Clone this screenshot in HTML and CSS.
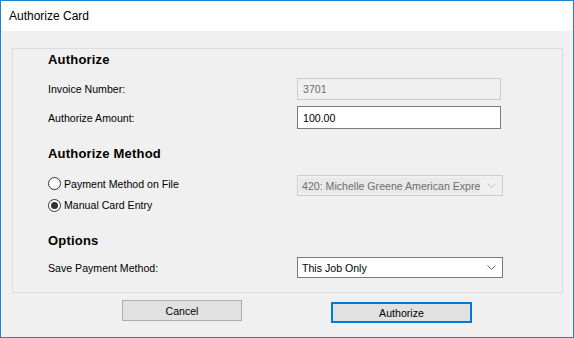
FILE: index.html
```html
<!DOCTYPE html>
<html lang="en">
<head>
    <meta charset="UTF-8">
    <title>Authorize Card</title>
    <link rel="stylesheet" href="styles.css">
</head>
<body>
    <div class="window">
        <div class="titlebar">Authorize Card</div>

        <div class="content">
            <!-- Group box -->
            <div class="group">
                <div class="heading">Authorize</div>

                <div class="row row-invoice">
                    <label class="label">Invoice Number:</label>
                    <input class="field disabled" value="3701" disabled>
                </div>
                <div class="row row-amount">
                    <label class="label">Authorize Amount:</label>
                    <input class="field" value="100.00">
                </div>

                <div class="heading heading-method">Authorize Method</div>

                <div class="row row-onfile">
                    <label class="radio"><span class="dot"></span>Payment Method on File</label>
                    <div class="combo disabled">
                        <span class="combo-text">420: Michelle Greene American Express</span>
                        <svg class="chevron" width="9" height="5" viewBox="0 0 9 5"><path d="M0.5 0.5 L4.5 4.5 L8.5 0.5" fill="none" stroke="currentColor" stroke-width="1"/></svg>
                    </div>
                </div>
                <div class="row row-manual">
                    <label class="radio"><span class="dot checked"></span>Manual Card Entry</label>
                </div>

                <div class="heading heading-options">Options</div>

                <div class="row row-save">
                    <label class="label">Save Payment Method:</label>
                    <div class="combo">
                        <span class="combo-text">This Job Only</span>
                        <svg class="chevron" width="9" height="5" viewBox="0 0 9 5"><path d="M0.5 0.5 L4.5 4.5 L8.5 0.5" fill="none" stroke="currentColor" stroke-width="1"/></svg>
                    </div>
                </div>
            </div>

            <div class="buttons">
                <button class="btn btn-cancel">Cancel</button>
                <button class="btn btn-default">Authorize</button>
            </div>
        </div>
    </div>
</body>
</html>
```

FILE: styles.css
```css
* {
    box-sizing: border-box;
}
body {
    margin: 0;
    font-family: "Liberation Sans", Arial, sans-serif;
    font-size: 10.6px;
    color: #000;
    background: #f0f0f0;
}
.window {
    width: 574px;
    height: 338px;
    border: 1px solid #1883d7;
    background: #f0f0f0;
}
.titlebar {
    height: 30px;
    line-height: 30px;
    padding-left: 8px;
    background: #fff;
    font-size: 12px;
}
.content {
    padding: 17px 10px 0 11px;
}
.group {
    width: 551px;
    height: 245px;
    border: 1px solid #dcdcdc;
    padding-left: 35px;
}
.heading {
    height: 21px;
    line-height: 21px;
    font-size: 13px;
    font-weight: bold;
    letter-spacing: 0.2px;
}
.heading-method {
    margin-top: 14px;
}
.heading-options {
    margin-top: 16px;
}
.row {
    display: flex;
    align-items: center;
}
.label {
    width: 249px;
}
.row-invoice {
    margin-top: 8px;
    height: 22px;
}
.row-amount {
    margin-top: 6px;
    height: 23px;
}
.row-onfile {
    margin-top: 11px;
    height: 21px;
}
.row-manual {
    height: 18px;
}
.row-save {
    margin-top: 6px;
    height: 21px;
}
.field {
    width: 204px;
    height: 100%;
    margin: 0;
    border: 1px solid #7a7a7a;
    background: #fff;
    padding: 0 5px;
    font-family: inherit;
    font-size: 10.6px;
    color: #000;
    outline: none;
}
.field.disabled {
    border-color: #cccccc;
    background: #f0f0f0;
    color: #6d6d6d;
}
.radio {
    width: 249px;
    display: flex;
    align-items: center;
    gap: 3px;
}
.row-onfile .radio {
    padding-bottom: 4px;
}
.dot {
    width: 13px;
    height: 13px;
    border: 1px solid #333;
    border-radius: 50%;
    background: #fff;
    display: flex;
    align-items: center;
    justify-content: center;
}
.dot.checked::after {
    content: "";
    width: 7px;
    height: 7px;
    border-radius: 50%;
    background: #333;
}
.combo {
    width: 206px;
    height: 100%;
    border: 1px solid #7a7a7a;
    background: #fff;
    display: flex;
    align-items: center;
    padding: 0 4px 0 4px;
    color: #000;
}
.combo.disabled {
    border-color: #cccccc;
    background: #f0f0f0;
    color: #6d6d6d;
    padding: 2px 4px 2px 1px;
}
.combo-text {
    flex: 1;
    white-space: nowrap;
    overflow: hidden;
    height: 100%;
    display: flex;
    align-items: center;
}
.combo.disabled .combo-text {
    background: #e9e9e9;
    padding-left: 3px;
    margin-right: 7px;
}
.combo:not(.disabled) .combo-text {
    padding-right: 10px;
}
.chevron {
    color: #606060;
    margin-right: 2px;
}
.combo.disabled .chevron {
    color: #bcbcbc;
}
.buttons {
    display: flex;
    align-items: flex-start;
    margin-left: 110px;
    margin-top: 7px;
    gap: 89px;
}
.btn {
    height: 21px;
    margin: 0;
    padding: 0;
    background: #e1e1e1;
    border: 1px solid #adadad;
    font-family: inherit;
    font-size: 10.6px;
    color: #000;
}
.btn-cancel {
    width: 120px;
}
.btn-default {
    width: 141px;
    margin-top: 2px;
    border: 2px solid #0078d7;
}
```
